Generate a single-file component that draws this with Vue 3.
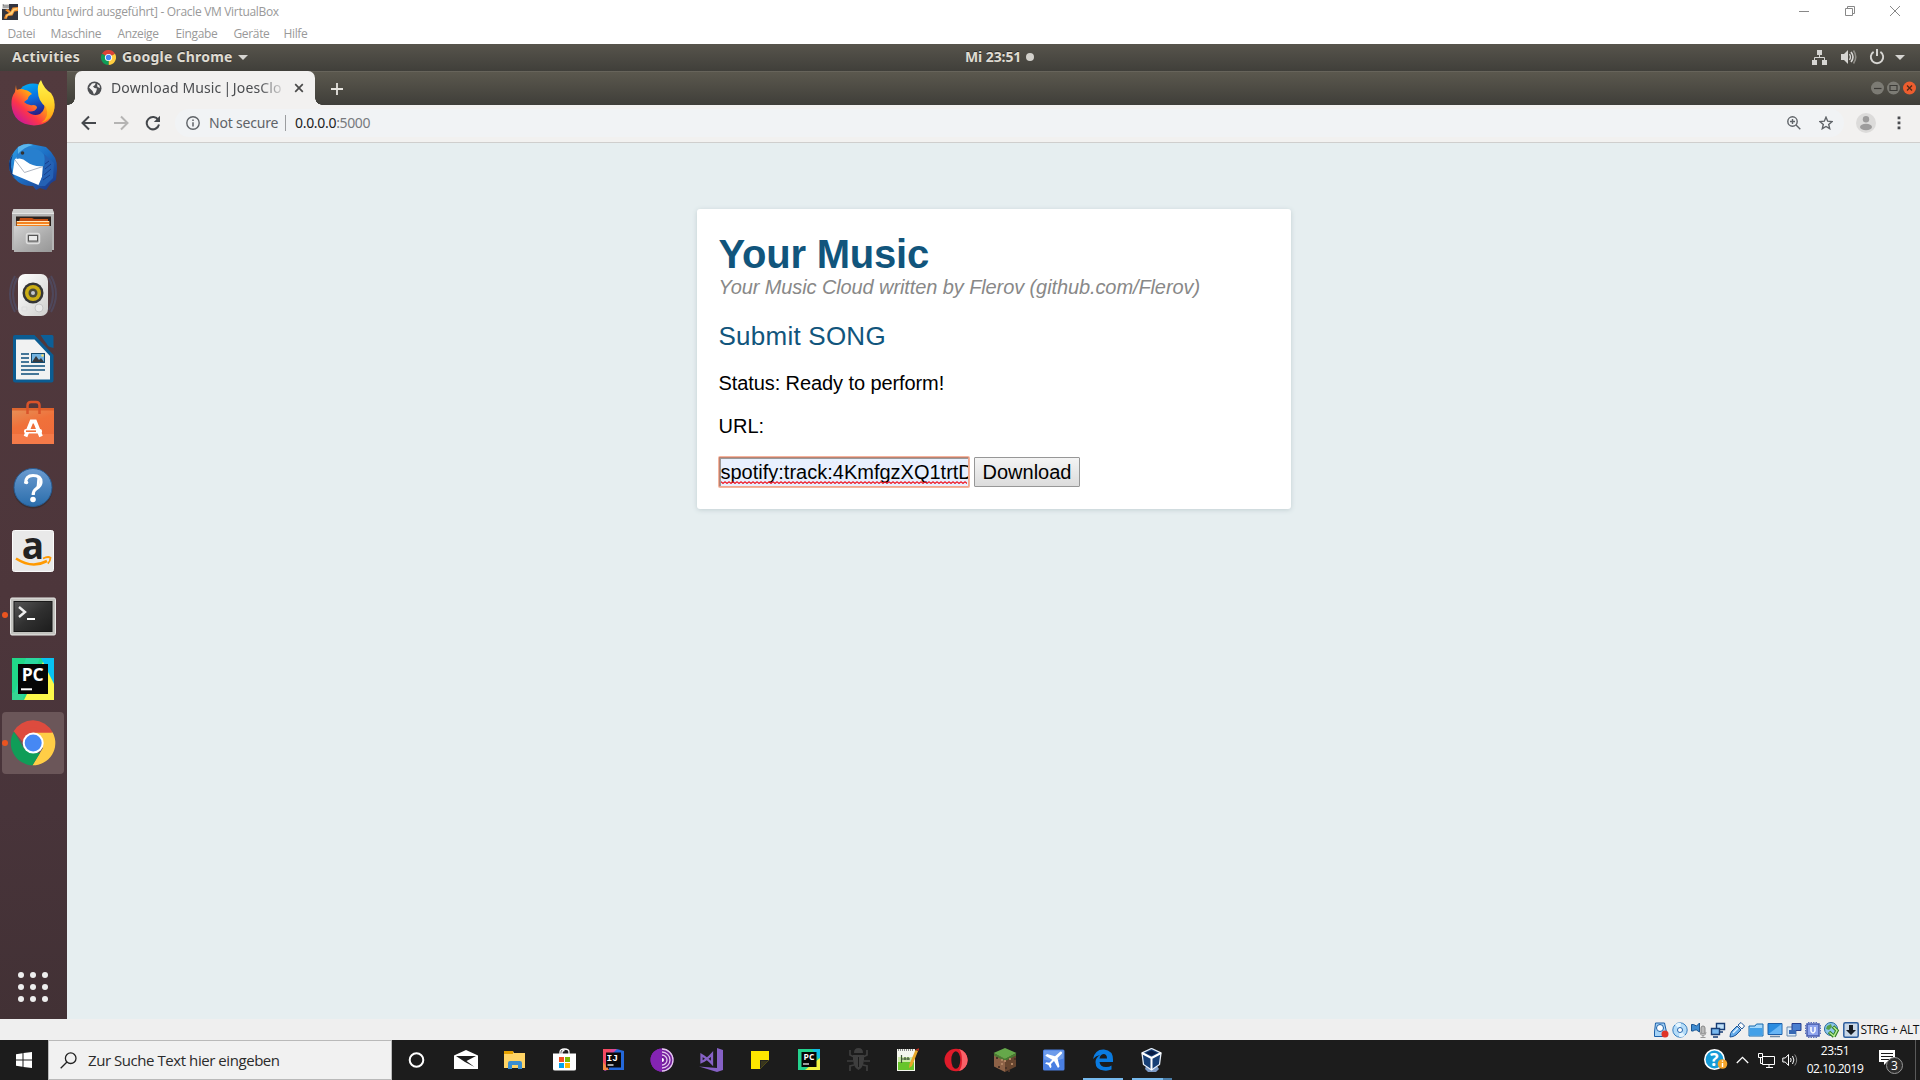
<script setup>
import { ref } from 'vue'

const menus = ['Datei', 'Maschine', 'Anzeige', 'Eingabe', 'Geräte', 'Hilfe']
const url = ref('spotify:track:4KmfgzXQ1trtD')
const gridDots = Array.from({ length: 9 }, (_, i) => i)
const soil = [
  [23, 27], [28, 33], [25, 36], [31, 30], [32, 37], [38, 33], [41, 28], [36, 28], [35, 40], [28, 29]
]
</script>

<template>
  <div class="screen">
    <!-- VirtualBox window chrome -->
    <header class="vm-head">
      <div class="vm-title">
        <svg class="vm-icon" width="16" height="16" viewBox="0 0 16 16">
          <rect width="16" height="16" fill="#33343f" />
          <path d="M3 6 L6 5 L8.500 7.500 L10.500 3.500 L16 3 V7 L12.500 7.500 L10.500 11.500 L6 12 L4.500 15 L2 14.500 L3.500 10.500 L7 9 Z" fill="#f08c2c" />
          <path d="M9 8 L11.500 4.500 L15.500 4 V5.500 L12 6.500 L10 10.500 L6 11 L4 14 L4.500 11 Z" fill="#ffd27a" />
          <rect width="7" height="5" fill="#d8d8d8" />
          <path d="M1 1h1v3M4 1v3M6 1v3" stroke="#555" fill="none" stroke-width=".8" />
        </svg>
        <span class="vm-name">Ubuntu [wird ausgeführt] - Oracle VM VirtualBox</span>
        <div class="vm-controls">
          <svg width="12" height="12" viewBox="0 0 12 12"><path d="M1 6.500h10" stroke="#888" /></svg>
          <svg width="12" height="12" viewBox="0 0 12 12"><path d="M1.500 3.500h7v7h-7zM3.500 3V1.500h7v7H9" stroke="#888" fill="none" /></svg>
          <svg width="12" height="12" viewBox="0 0 12 12"><path d="M1 1l10 10M11 1L1 11" stroke="#888" /></svg>
        </div>
      </div>
      <nav class="vm-menu">
        <span v-for="(m, i) in menus" :key="m" :class="'m' + i">{{ m }}</span>
      </nav>
    </header>

    <!-- GNOME top panel -->
    <div class="panel">
      <span class="activities">Activities</span>
      <svg class="panel-chrome" width="15" height="15" viewBox="0 0 48 48">
        <path d="M24 24 L3.200 12 A24 24 0 0 1 44.800 12 Z" fill="#db4437" />
        <path d="M24 24 L44.800 12 A24 24 0 0 1 24 48 Z" fill="#ffcd40" />
        <path d="M24 24 L24 48 A24 24 0 0 1 3.200 12 Z" fill="#0f9d58" />
        <circle cx="24" cy="24" r="11.500" fill="#fff" /><circle cx="24" cy="24" r="8.500" fill="#4285f4" />
      </svg>
      <span class="app-name">Google Chrome</span>
      <i class="caret"></i>
      <div class="clock"><span>Mi 23:51</span><i></i></div>
      <div class="sys">
        <svg width="16" height="16" viewBox="0 0 16 16"><path d="M5 1h5v5H5zM0 11h5v5H0zM10 11h5v5h-5z" fill="#d6d5d2" /><path d="M7.500 6v2.500M2.500 11V8.500h10V11" stroke="#d6d5d2" fill="none" /></svg>
        <svg width="16" height="16" viewBox="0 0 16 16"><path d="M0 5h3l4-4v14l-4-4H0z" fill="#d6d5d2" /><path d="M8.500 5q2 3 0 6" stroke="#d6d5d2" stroke-width="1.300" fill="none" /><path d="M10 3q4 5 0 10" stroke="#d6d5d2" stroke-width="1.600" fill="none" /><path d="M12.500 1.500q4.500 6.500 0 13" stroke="#8f8d87" stroke-width="1.600" fill="none" /></svg>
        <svg width="16" height="16" viewBox="0 0 16 16"><path d="M4.600 2.900a6.200 6.200 0 1 0 6.800 0" stroke="#d6d5d2" stroke-width="1.900" fill="none" /><path d="M8 0v7" stroke="#d6d5d2" stroke-width="2" /></svg>
        <i class="caret"></i>
      </div>
    </div>

    <div class="desktop">
      <!-- Dock -->
      <aside class="dock">
        <svg class="tile" viewBox="0 0 62 62">
          <defs>
            <linearGradient id="fx" x1=".9" y1=".1" x2=".15" y2=".9"><stop offset="0" stop-color="#ffdf2e" /><stop offset=".4" stop-color="#ff9a16" /><stop offset=".7" stop-color="#ff3647" /><stop offset="1" stop-color="#c8189a" /></linearGradient>
            <linearGradient id="fxb" x1="0" y1="0" x2=".3" y2="1"><stop offset="0" stop-color="#00b6f5" /><stop offset=".5" stop-color="#0a6fe0" /><stop offset="1" stop-color="#2a1a80" /></linearGradient>
            <linearGradient id="fxt" x1="0" y1="0" x2="0" y2="1"><stop offset="0" stop-color="#fff44f" /><stop offset=".5" stop-color="#ffd52a" /><stop offset="1" stop-color="#ff980e" /></linearGradient>
          </defs>
          <circle cx="31" cy="29" r="17.500" fill="url(#fxb)" />
          <path d="M14 13 Q14 17 15 18 Q19 16 23 18 Q26 18 30 22 Q26 24 26 27 L22 30 Q26 34 31 33 Q35 33 35 36 Q32 41 25 39 Q31 45 38 42 Q45 37 41 27 Q47 29 48 21 Q53 29 52.500 36 Q50 53 32 53.500 Q11 52 9.500 33 Q9 25 13 20 Z" fill="url(#fx)" />
          <path d="M39 8 Q42 17 49 21 Q54 28 52 38 Q49 48 39 51 Q48 45 44 35 Q36 29 36 20 Q35 13 39 8 Z" fill="url(#fxt)" />
        </svg>
        <svg class="tile" viewBox="0 0 62 62">
          <defs><linearGradient id="tb" x1="0" y1="0" x2="1" y2="1"><stop offset="0" stop-color="#2ea0e8" /><stop offset=".5" stop-color="#1d6fc4" /><stop offset="1" stop-color="#1b2f80" /></linearGradient></defs>
          <path d="M16 11 Q24 6 31 8.500 L44 11 Q56 21 55 33 L54 44 L49 47 L44 54 L38 52 L34 54 L31 50 Q20 51 12 42 Q3 31 10 19 Q13 14 16 11 Z" fill="url(#tb)" />
          <path d="M11 18 Q6 32 13 42 L9 38 Q4 27 11 18Z" fill="#143777" />
          <path d="M10.500 38 L12.500 24 L16 20 L41 28 L40 41 L37.500 49.500 Z" fill="#fff" />
          <path d="M13 24 L22.500 36.500 L41 30.500" fill="none" stroke="#a5acb8" stroke-width=".9" />
          <path d="M14.500 23 Q14 13 26 11 Q38 12 43 20 L42 30 Q31 31 25 26 Q20 21 14.500 23Z" fill="#277fce" />
          <path d="M16 11 Q24 6 31 9 Q22 11 16 18Z" fill="#5bb5ed" />
          <path d="M42 18 L52 27 L51 42 L43 50 L36 50 L40 41 Q45 31 42 18Z" fill="#2461b5" />
          <path d="M43 28l4-3M43 33l6-5M42 39l7-6M41 44l7-5" stroke="#163e8c" stroke-width="1" />
          <circle cx="20.500" cy="17" r="1.800" fill="#333" />
        </svg>
        <svg class="tile" viewBox="0 0 62 62">
          <defs><linearGradient id="fl" x1="0" y1="0" x2="1" y2="1"><stop offset="0" stop-color="#d2d2d2" /><stop offset=".6" stop-color="#ababab" /><stop offset="1" stop-color="#979797" /></linearGradient></defs>
          <path d="M11.500 9h39l1.500 4v37h-2v2H12v-2h-2V13z" fill="#b5b5b5" /><path d="M11.500 9h39l1.500 4H10z" fill="#cfcfcf" /><path d="M10 13.500h42" stroke="#e3e3e3" />
          <rect x="14" y="16.500" width="35" height="10" fill="#2b211d" />
          <path d="M18 18h12l2 1h14v7H16z" fill="#c54f12" /><path d="M14.500 21h33v6h-33z" fill="#f58220" /><path d="M15 21.500h32M15 24.500h32" stroke="#ffe7bd" stroke-width="1.200" />
          <rect x="12" y="26" width="38" height="26" fill="url(#fl)" />
          <rect x="24.500" y="33.500" width="13" height="10" rx="2" fill="#aaa" stroke="#dedede" stroke-width="1.500" /><rect x="26.500" y="35.500" width="9" height="5.500" fill="#e9e9e9" stroke="#555" />
        </svg>
        <svg class="tile" viewBox="0 0 62 62">
          <defs><linearGradient id="rb" x1="0" y1="0" x2="1" y2="1"><stop offset="0" stop-color="#fff" /><stop offset="1" stop-color="#cfcfcd" /></linearGradient></defs>
          <path d="M13 12q-10 18 0 36M49 12q10 18 0 36M15 14q-8 16 0 32M47 14q8 16 0 32" fill="none" stroke="#4d5c80" stroke-width="2" opacity=".45" />
          <rect x="16" y="10" width="30" height="42" rx="7" fill="url(#rb)" />
          <circle cx="31" cy="29" r="10.500" fill="#343536" /><circle cx="31" cy="29" r="8" fill="#cbae14" /><circle cx="31" cy="29" r="4.500" fill="#4b4b3d" /><circle cx="31" cy="29" r="2" fill="#c4c8d0" />
          <circle cx="37" cy="44" r="4" fill="#e9e9e9" stroke="#c6c6c6" /><path d="M20 43h5v4h-5z" fill="none" stroke="#ddd" />
        </svg>
        <svg class="tile" viewBox="0 0 62 62">
          <path d="M13 7h19.500L51.500 27v25.500a2 2 0 0 1-2 2h-36a2.500 2.500 0 0 1-2.500-2.500V9a2 2 0 0 1 2-2z" fill="#0b5c92" />
          <path d="M38.500 7h11.500q1.500 0 1.500 1.500V20q-6-1-7-4.500-4-5-6-8.500z" fill="#0c5f98" />
          <path d="M14 11.500h18.500L48 28v23.500H14z" fill="#f1f2f2" />
          <path d="M19 26h8M19 30h8M19 34h8M19 38h24M19 42h24M19 46h18" stroke="#0b4d7b" stroke-width="1.700" />
          <rect x="29.500" y="25.500" width="13" height="9" fill="#73b3e0" stroke="#134b70" /><path d="M30 34l4-6 3 4 2-2 3 4z" fill="#373a3e" /><circle cx="40.500" cy="27.500" r="1.200" fill="#ffe264" />
        </svg>
        <svg class="tile" viewBox="0 0 62 62">
          <defs><linearGradient id="sw" x1="0" y1="0" x2=".4" y2="1"><stop offset="0" stop-color="#e4935a" /><stop offset=".5" stop-color="#f0713a" /><stop offset="1" stop-color="#ef6c3b" /></linearGradient></defs>
          <path d="M10 16h42v36H10z" fill="url(#sw)" /><path d="M10 16h42v2.500H10z" fill="#d95420" opacity=".7" /><path d="M10 42h42v10H10z" fill="#f98857" opacity=".5" />
          <path d="M25.500 22V13.500q0-3.500 3.500-3.500h5q3.500 0 3.500 3.500v8.500" stroke="#d9532a" stroke-width="2.500" fill="none" />
          <path d="M23.500 44.500L29.500 29.500h3.500L39 44.500" fill="none" stroke="#fff" stroke-width="3.800" /><rect x="22" y="37" width="18" height="4.400" rx="2" fill="#fff" /><path d="M24 39.200h10" stroke="#f0713a" stroke-width="1.600" />
        </svg>
        <svg class="tile" viewBox="0 0 62 62">
          <defs><linearGradient id="hp" x1="0" y1="0" x2="0" y2="1"><stop offset="0" stop-color="#6b9bd0" /><stop offset="1" stop-color="#2a6dab" /></linearGradient></defs>
          <circle cx="31" cy="33" r="19.500" fill="#222" opacity=".4" /><circle cx="31" cy="31.500" r="19" fill="url(#hp)" stroke="#285b91" />
          <path d="M23.500 27.500 Q23.500 19.500 31 19.500 Q39 19.500 39 26 Q39 30 34.500 32.500 Q31.200 34.500 31.200 39" fill="none" stroke="#fff" stroke-width="3.200" /><path d="M35.500 20.500 Q40.500 26 34.500 32z" fill="#fff" /><circle cx="24.500" cy="26.500" r="1.800" fill="#fff" /><circle cx="31" cy="43.500" r="2.800" fill="#fff" />
        </svg>
        <svg class="tile" viewBox="0 0 62 62">
          <rect x="10.500" y="10.500" width="41" height="41" rx="2" fill="#e9e9e9" stroke="#fafafa" />
          <text x="31" y="38.500" text-anchor="middle" class="amazon-a">a</text>
          <path d="M14 38.500q16 10.500 31 2.500" fill="none" stroke="#ff9900" stroke-width="2.600" /><path d="M41 38.500q5-2.500 7.500-.8q-.2 3.500-2.700 6" fill="none" stroke="#ff9900" stroke-width="1.800" />
        </svg>
        <div class="tile running">
          <svg viewBox="0 0 62 62">
            <defs><linearGradient id="tm" x1="0" y1="0" x2="1" y2="1"><stop offset="0" stop-color="#555" /><stop offset=".5" stop-color="#303030" /><stop offset="1" stop-color="#1d1d1d" /></linearGradient></defs>
            <rect x="8.500" y="14" width="45" height="37" rx="1.500" fill="#c3c3bf" stroke="#e8e8e6" /><rect x="11.500" y="17" width="39" height="31" fill="#191919" /><rect x="12.500" y="18" width="37" height="29" fill="url(#tm)" />
            <path d="M17 23l6 5-6 5" fill="none" stroke="#eee" stroke-width="2.400" /><path d="M25 35h8" stroke="#fff" stroke-width="2" />
          </svg>
        </div>
        <svg class="tile" viewBox="0 0 62 62">
          <rect x="10" y="10" width="42" height="42" fill="#21d789" /><path d="M10 52l14-42h14L20 52z" fill="#2ad8a0" /><path d="M52 34V52H22L42 12z" fill="#fcf84a" /><path d="M39 10h13v26l-10-20z" fill="#07c3f2" /><path d="M10 45l8-2 4 9H10z" fill="#35d692" />
          <rect x="16" y="16" width="30" height="30" fill="#050505" />
          <text x="30.700" y="33" text-anchor="middle" class="pc">PC</text><path d="M19 41.300h11" stroke="#fff" stroke-width="2" />
        </svg>
        <div class="tile running active">
          <svg viewBox="0 0 62 62">
            <path d="M31.200 31 L11.500 19.500 A22.300 22.300 0 0 1 50.700 20.500 Z" fill="#dd4b3e" />
            <path d="M31.200 20.500 H50.700 A22.300 22.300 0 0 1 30.500 53.300 L41 36 Z" fill="#ffcd46" />
            <path d="M12 19.500 L22 36.500 L31 41 L38 41 L30.500 53.300 A22.300 22.300 0 0 1 12 19.500 Z" fill="#109d58" />
            <path d="M12 19.500 L21.500 31 L31.200 20.500 H50.700 L31.200 15z" fill="#dd4b3e" />
            <circle cx="31.200" cy="31" r="10.500" fill="#fff" /><circle cx="31.200" cy="31" r="8.500" fill="#4688f4" />
          </svg>
        </div>
        <div class="apps"><i v-for="d in gridDots" :key="d"></i></div>
      </aside>

      <!-- Chrome browser -->
      <section class="browser">
        <div class="tabs">
          <div class="tab">
            <svg width="15" height="15" viewBox="0 0 15 15"><circle cx="7.500" cy="7.500" r="7" fill="#4d4f52" /><path d="M2 6.500l3-4 3.500-.5L8 4l-2 1.500L7.500 7l2.500.5L9 11l-2 2.500L5.500 10zM10 3l2.500 1.500L13 7l-2.500-1z" fill="#f2f1f0" /></svg>
            <span class="tab-title">Download Music<b>|</b>JoesClo</span>
            <svg width="10" height="10" viewBox="0 0 10 10"><path d="M1.200 1.200l7.600 7.600M8.800 1.200L1.200 8.800" stroke="#4a4a4a" stroke-width="1.700" /></svg>
          </div>
          <svg class="plus" width="12" height="12" viewBox="0 0 12 12"><path d="M0 6h12M6 0v12" stroke="#e6e4df" stroke-width="1.800" /></svg>
          <div class="win-buttons">
            <svg width="13" height="14" viewBox="0 0 13 14"><circle cx="6.500" cy="7" r="6.500" fill="#7c7b74" /><path d="M3 7.500h7.500" stroke="#3c3b37" stroke-width="1.200" /></svg>
            <svg width="13" height="14" viewBox="0 0 13 14"><circle cx="6.500" cy="7" r="6.500" fill="#7c7b74" /><path d="M3 4.500h7v5H3z" stroke="#3c3b37" fill="none" stroke-width="1.200" /></svg>
            <svg width="13" height="14" viewBox="0 0 13 14"><circle cx="6.500" cy="7" r="6.500" fill="#ee5d2e" /><path d="M4 4.500l5 5M9 4.500l-5 5" stroke="#512a18" stroke-width="1.300" /></svg>
          </div>
        </div>
        <div class="toolbar">
          <svg class="nav" width="16" height="16" viewBox="0 0 16 16"><path d="M15 8H2M8 1.500L1.500 8L8 14.500" fill="none" stroke="#45484c" stroke-width="2" /></svg>
          <svg class="nav" width="16" height="16" viewBox="0 0 16 16"><path d="M1 8H14M8 1.500L14.500 8L8 14.500" fill="none" stroke="#b5b4b3" stroke-width="2" /></svg>
          <svg class="nav" width="16" height="16" viewBox="0 0 16 16"><path d="M13.300 5A6.200 6.200 0 1 0 14 9.500" fill="none" stroke="#45484c" stroke-width="2" /><path d="M15 .800V7H8.800z" fill="#45484c" /></svg>
          <div class="omnibox">
            <svg width="14" height="14" viewBox="0 0 14 14"><circle cx="7" cy="7" r="6.200" fill="none" stroke="#5f6368" stroke-width="1.400" /><path d="M7 6.200v4.300M7 3.500v1.600" stroke="#5f6368" stroke-width="1.500" /></svg>
            <span class="secure">Not secure</span><i class="sep"></i><span class="host">0.0.0.0</span><span class="port">:5000</span>
            <svg class="lens" width="14" height="14" viewBox="0 0 14 14"><circle cx="5.500" cy="5.500" r="4.700" fill="none" stroke="#5f6368" stroke-width="1.400" /><path d="M9 9l4.300 4.300M3 5.500h5M5.500 3v5" stroke="#5f6368" stroke-width="1.400" /></svg>
            <svg width="14" height="14" viewBox="0 0 14 14"><path d="M7 1.200l1.700 4 4.300.4-3.300 2.900 1 4.200L7 10.500l-3.700 2.200 1-4.200L1 5.600l4.300-.4z" fill="none" stroke="#5f6368" stroke-width="1.400" /></svg>
          </div>
          <svg class="avatar" width="20" height="20" viewBox="0 0 20 20"><circle cx="10" cy="10" r="10" fill="#dcdbda" /><circle cx="10" cy="6.200" r="3.200" fill="#9d9c9c" /><ellipse cx="10" cy="14" rx="6" ry="3.200" fill="#9d9c9c" /></svg>
          <svg width="4" height="14" viewBox="0 0 4 14"><path d="M.600.500h2.800v2.800H.600zM.600 5.500h2.800v2.800H.600zM.600 10.500h2.800v2.800H.600z" fill="#4a4c50" /></svg>
        </div>
        <main class="page">
          <div class="card">
            <h1>Your Music</h1>
            <p class="sub">Your Music Cloud written by Flerov (github.com/Flerov)</p>
            <h2>Submit SONG</h2>
            <p class="status">Status: Ready to perform!</p>
            <p class="label">URL:</p>
            <form class="row" @submit.prevent>
              <div class="field"><span>{{ url }}</span>
                <svg class="squiggle" width="246" height="3"><defs><pattern id="sq" width="4" height="3" patternUnits="userSpaceOnUse"><path d="M0 .600L2 2.400L4 .600" fill="none" stroke="#f0101c" stroke-width="1.200" /></pattern></defs><rect width="246" height="3" fill="url(#sq)" /></svg>
              </div>
              <button type="button">Download</button>
            </form>
          </div>
        </main>
      </section>
    </div>

    <!-- VirtualBox status bar -->
    <div class="vm-status">
      <svg viewBox="0 0 16 16"><path d="M2.500 1h9l2 9v4.500h-12V10z" fill="#a6d3f6" stroke="#1b5fa8" /><circle cx="7" cy="6" r="3.500" fill="#fff" stroke="#1b5fa8" /><circle cx="12" cy="12" r="3.500" fill="#df3427" /></svg>
      <svg viewBox="0 0 16 16"><circle cx="8" cy="8" r="7.200" fill="#b5dcf8" stroke="#397fc0" /><path d="M8 8L3 2.500A7 7 0 0 1 9 1zM8 8l5 5.500a7 7 0 0 1-6 1.300z" fill="#e4f5ff" /><circle cx="8" cy="8" r="2.500" fill="#fff" stroke="#2765ac" /></svg>
      <svg viewBox="0 0 16 16"><path d="M.500 2.500h2l3 1.500 3-3v9L5.500 8h-2l-1 1h-2z" fill="#3f8bd0" stroke="#1b548f" /><rect x="10" y="4" width="4" height="8" rx="2" fill="#bbb" stroke="#888" /><path d="M9 10q0 3.500 3 3.500t3-3.500M12 13v2.500M9.500 15.500h5" fill="none" stroke="#999" /></svg>
      <svg viewBox="0 0 16 16"><path d="M6.500 1.500h8v6h-8zM9 10h4" fill="#bfe0fa" stroke="#173c74" stroke-width="1.400" /><path d="M1.500 6.500h8v6h-8zM3 15h5" fill="#78b8ef" stroke="#173c74" stroke-width="1.400" /></svg>
      <svg viewBox="0 0 16 16"><path d="M1 15q0-4 2-6l5-5 4 4-5 5q-3 2-6 2z" fill="#64abea" stroke="#1c5599" /><path d="M9 3l3-2.500 3.500 3.500L13 7z" fill="#fff" stroke="#1c5599" /><path d="M4 11l5-5" stroke="#e0f2ff" stroke-width="1.500" /></svg>
      <svg viewBox="0 0 16 16"><path d="M1 4h6l1.500-2H15v12H1z" fill="#a6d8fb" stroke="#1769ad" /><path d="M1.500 6h13v7.500h-13z" fill="#43a0e8" /></svg>
      <svg viewBox="0 0 16 16"><path d="M1 1.500h14v11H1z" fill="#2b8ce0" stroke="#1d5ca5" /><path d="M1.500 12L14.500 2v10z" fill="#68b5f5" /><path d="M3 14.500h10" stroke="#6e87a2" stroke-width="1.500" /></svg>
      <svg viewBox="0 0 16 16"><path d="M1 5h9v9H1z" fill="#dcebf7" stroke="#6a89ae" /><path d="M6 1.500h9v7H6z" fill="#4b7fd0" stroke="#273f8f" /><path d="M3 8h7v4H3z" fill="#3768b5" /></svg>
      <svg viewBox="0 0 16 16"><rect x="2" y="2" width="12" height="12" fill="#8ea3ed" stroke="#4459ad" stroke-width="1.500" /><path d="M3 .500h10M3 15.500h10M.500 3v10M15.500 3v10" stroke="#5c70bd" stroke-dasharray="1.500 1" /><path d="M6 5v4q2 4 4 0V5" fill="none" stroke="#fff" stroke-width="1.500" /></svg>
      <svg viewBox="0 0 16 16"><circle cx="7" cy="7" r="6.500" fill="#8cc6ea" stroke="#24679d" /><path d="M3 4l4-2 1 3-3 3-3-1z" fill="#55a04a" /><path d="M5 10l5 4.500M9 4.500l4 4-3 6" fill="none" stroke="#347d26" stroke-width="3.600" /><path d="M5.500 10.500l4.500 3.500 3-5.500-3.500-3.500" fill="none" stroke="#b5ee91" stroke-width="1.500" /></svg>
      <svg viewBox="0 0 16 16"><rect x=".800" y=".800" width="14.400" height="14.400" rx="1.500" fill="#c9d7e7" stroke="#2c5c9c" stroke-width="1.500" /><path d="M6 3h4v5h3l-5 5-5-5h3z" fill="#171b22" /></svg>
      <span class="hostkey">STRG + ALT</span>
    </div>

    <!-- Windows taskbar -->
    <footer class="taskbar">
      <div class="start"><svg width="16" height="16" viewBox="0 0 16 16"><path d="M0 2.200L6.500 1.200V7.500H0zM7.500 1L16 0V7.500H7.500zM0 8.500h6.500v6.300L0 13.800zM7.500 8.500H16V16l-8.500-1z" fill="#fff" /></svg></div>
      <div class="search">
        <svg width="17" height="17" viewBox="0 0 17 17"><circle cx="10.700" cy="6.200" r="5.300" fill="none" stroke="#222" stroke-width="1.300" /><path d="M7 10L.700 16.300" stroke="#222" stroke-width="1.300" /></svg>
        <span>Zur Suche Text hier eingeben</span>
      </div>
      <div class="tasks">
        <div><svg viewBox="0 0 24 24"><circle cx="11.500" cy="12" r="6.800" fill="none" stroke="#fff" stroke-width="2" /></svg></div>
        <div><svg viewBox="0 0 24 24"><path d="M0 7.500L12 2l12 5.500V21H0z" fill="#fff" /><path d="M2 8h20l-9.500 5 8 6L11 14z" fill="#1c1c1c" /></svg></div>
        <div><svg viewBox="0 0 24 24"><path d="M1 3h9l1 2h11v15H1z" fill="#ffd465" /><path d="M1 3h9v3H1z" fill="#e5a100" /><path d="M5 21v-6q0-2 2-2h10q2 0 2 2v6h-4v-4H9v4z" fill="#3b8ed0" /></svg></div>
        <div><svg viewBox="0 0 24 24"><path d="M8 6V4q0-3 4.500-3T17 4v2M10 6V4q0-1.500 2.500-1.500" fill="none" stroke="#fff" stroke-width="1.300" /><path d="M1 5.500h23V21q0 1.500-2 1.500H3Q1 22.500 1 21z" fill="#fff" /><path d="M7 9h5v5H7z" fill="#f25022" /><path d="M13 9h5v5h-5z" fill="#7fba00" /><path d="M7 15h5v5H7z" fill="#00a4ef" /><path d="M13 15h5v5h-5z" fill="#ffb900" /></svg></div>
        <div><svg viewBox="0 0 24 24"><path d="M2 1h14L6 22H2z" fill="#f44a62" /><path d="M10 1h6L5 23H3z" fill="#c44bb0" opacity=".7" /><path d="M2 14l6 8H2z" fill="#f68b42" /><path d="M16 1l7 2v19H8V9z" fill="#2468da" /><rect x="5" y="4.500" width="15" height="15" fill="#090909" /><text x="5.500" y="13" class="ij">IJ</text><path d="M6.500 17h6" stroke="#fff" stroke-width="1.300" /></svg></div>
        <div><svg viewBox="0 0 24 24"><circle cx="12" cy="12" r="11.500" fill="#731d9c" /><path d="M12 .500A11.500 11.500 0 0 0 12 23.500z" fill="#8424b3" /><path d="M12 4a8 8 0 0 1 0 16M12 7a5 5 0 0 1 0 10M12 1a11 11 0 0 1 0 22" fill="none" stroke="#e4c9ee" stroke-width="1.300" /><path d="M12 10a2 2 0 0 1 0 4z" fill="#fff" /></svg></div>
        <div><svg viewBox="0 0 24 24"><path d="M18 0l6 2v20l-6 2L0 18.500l18 1.500z" fill="#8661c5" /><path d="M2.500 7v7q5-2 10.500-8v9.500Q7 9.500 2.500 7z" fill="none" stroke="#8661c5" stroke-width="2.300" /></svg></div>
        <div><svg viewBox="0 0 24 24"><path d="M3 3h18v18H3z" fill="#ffe500" /><path d="M12 21v-9h9z" fill="#222" /><path d="M12 21l9-9v9z" fill="#1c1c1c" /><path d="M13 19.500v-6.500h6.500z" fill="#39361d" /></svg></div>
        <div><svg viewBox="0 0 24 24"><path d="M1 1h22v21H1z" fill="#24d28e" /><path d="M15 1h8v12z" fill="#10bde4" /><path d="M23 10v12H8z" fill="#eff143" /><rect x="4.500" y="4" width="15" height="15" fill="#050505" /><text x="12" y="12.200" text-anchor="middle" class="pc-small">PC</text><path d="M6 16h6" stroke="#fff" stroke-width="1.200" /></svg></div>
        <div><svg viewBox="0 0 24 24"><path d="M8 5q0-5 4.500-5T17 5zM7 7h11q1 12-5.500 15Q6 19 7 7z" fill="#3e3e3e" /><path d="M8 9L4 7V2M17 9l4-2V2M7 13H1M18 13h6M8 17l-4 1v5M17 17l4 1v5" fill="none" stroke="#3e3e3e" stroke-width="1.700" /><path d="M12.500 9v10" stroke="#1c1c1c" /></svg></div>
        <div><svg viewBox="0 0 24 24"><path d="M2 1h18v22H2z" fill="#f4f6ee" /><path d="M3 13h16v9H3z" fill="#67c52b" /><path d="M3 9h16v5H3z" fill="#cce9a8" /><path d="M3 2h15" stroke="#888" stroke-dasharray="1 1" stroke-width="2" /><path d="M6.500 7v8M10 9v3M13 9v3M7 11h8" stroke="#3c5633" stroke-width="1.200" /><path d="M20.500 2l2.500 1-6 15-3 2 .5-4z" fill="#e8a72a" /><path d="M20.500 1.500L23.500 3l1-3z" fill="#bd3021" /></svg></div>
        <div><svg viewBox="0 0 24 24"><ellipse cx="12" cy="12" rx="11.500" ry="11.300" fill="#df1b2a" /><path d="M15 1a11.300 11.300 0 0 1 0 22q3-3 3-11t-3-11z" fill="#fa6168" /><ellipse cx="11.800" cy="12" rx="4.500" ry="8.700" fill="#1c1c1c" /></svg></div>
        <div><svg viewBox="20 18 24 24"><path d="M21 23.500l11 5V42l-11-5.500z" fill="#8d6247" /><path d="M43 23.500l-11 5V42l11-5.500z" fill="#66452f" /><path d="M32 18l11.500 5L32 29l-11.500-6z" fill="#65a84a" /><path d="M21 23.500l11 5.500 11-5.500v2l-11 5.500-11-5.500z" fill="#467c31" /><rect v-for="(p, i) in soil" :key="i" :x="p[0]" :y="p[1]" width="2" height="2" :fill="i % 2 ? '#b08462' : '#4b3327'" /></svg></div>
        <div><svg viewBox="0 0 24 24"><rect x="1" y="1.500" width="21.500" height="21" rx="1.500" fill="#4a7fe2" /><path d="M2 2.500h19.500v8q-10 4-19.500 1z" fill="#8db5f0" opacity=".55" /><path d="M18.500 3.500q2 0 1.500 2L15.500 10l2 8.500-1.500 1.500-4-7-3 3 .5 3-1.300 1.300L6.500 17 3 15.500l1.300-1.300 3 .5 3-3-7-4L5 6l8 2.200z" fill="#fff" /></svg></div>
        <div class="open"><svg viewBox="0 0 24 24"><path d="M2 11Q4 1 13 1.500Q22 2.500 22 11.500V14H8.500Q9 19 15 19Q18.500 19 20.500 17.500V21.500Q17 23 13 22.500Q4.500 22 4.500 14Q4.500 10 9 7Q5 7.500 2 11ZM8.500 10.500H16Q16 6 12.500 6Q9 6.500 8.500 10.500Z" fill="#0a7be0" /></svg></div>
        <div class="open multi"><svg viewBox="0 0 24 24"><path d="M6 18h11l2 3-3 3H8l-3-3z" fill="#7c9ac5" /><path d="M11.500.500l9.500 4.500-1.500 11.500-8 5.500-8-5.500L2 5z" fill="#173f75" stroke="#e6eef8" stroke-width="1.300" /><path d="M2 5l9.500 5 9.500-5M11.500 10v12" fill="none" stroke="#fff" stroke-width="2" /><path d="M6 5l5.500-2.500L17 5l-5.500 2.500z" fill="#081c44" /></svg></div>
      </div>
      <div class="tray">
        <svg class="t-help" width="24" height="22" viewBox="0 0 24 22"><circle cx="10.500" cy="10.500" r="9.700" fill="#169bd7" stroke="#fff" stroke-width="1.600" /><text x="10.300" y="17" text-anchor="middle" class="tray-q">?</text><circle cx="18.500" cy="15" r="4.800" fill="#f4a52b" /><path d="M18.500 14v4M18.500 11.500v1.300" stroke="#fff" stroke-width="1.400" /></svg>
        <svg class="t-up" width="13" height="8" viewBox="0 0 13 8"><path d="M.800 7L6.500 1.300L12.200 7" fill="none" stroke="#fff" stroke-width="1.300" /></svg>
        <svg class="t-net" width="17" height="15" viewBox="0 0 17 15"><path d="M4.500 3.500h12v8h-12zM8 14.500h7M11 11.500v3M.500.500h4v4h-4zM2.500 4.500v6h2" fill="none" stroke="#fff" /></svg>
        <svg class="t-snd" width="17" height="14" viewBox="0 0 17 14"><path d="M.800 5h2.500L6.500 1.500v11L3.300 9H.800z" fill="none" stroke="#fff" /><path d="M8.500 5q1.300 2 0 4M10.500 3q2.800 4 0 8" fill="none" stroke="#fff" /><path d="M12.700 1.500q4 5.500 0 11" fill="none" stroke="#888" /></svg>
        <div class="t-clock"><span>23:51</span><span>02.10.2019</span></div>
        <svg class="t-note" width="26" height="26" viewBox="0 0 26 26"><path d="M1 1h16v12H9l-3 3v-3H1z" fill="#fff" /><path d="M3 4.500h12M3 7.500h12M3 10.500h8" stroke="#1c1c1c" /><circle cx="16.500" cy="16.500" r="8" fill="#2d2d2d" stroke="#999" /><text x="16.500" y="20.800" text-anchor="middle" class="badge">3</text></svg>
        <i class="peek"></i>
      </div>
    </footer>
  </div>
</template>

<style>
body { margin: 0; overflow: hidden; }
</style>

<style scoped>
* { box-sizing: border-box; }
svg { display: block; flex: none; }
span { white-space: nowrap; }
.screen { width: 1920px; height: 1080px; display: flex; flex-direction: column; overflow: hidden; font-family: "Noto Sans", sans-serif; background: #efefef; }

.vm-head { height: 44px; flex: none; background: #fff; color: #999; font-family: "Open Sans", sans-serif; font-size: 12px; }
.vm-title { height: 23px; display: flex; align-items: center; padding-left: 2px; }
.vm-icon { margin-right: 5px; }
.vm-name { letter-spacing: -.31px; }
.vm-controls { margin-left: auto; display: flex; gap: 33.500px; padding-right: 19px; position: relative; top: -1px; }
.vm-menu { display: flex; height: 21px; line-height: 21px; padding-left: 7.500px; letter-spacing: -.35px; }
.m0 { width: 43px; } .m1 { width: 67px; } .m2, .m3 { width: 58px; } .m4 { width: 50px; }

.panel { height: 27px; flex: none; display: flex; align-items: center; background: linear-gradient(#57544c, #403f3a); color: #dfdbd2; font-size: 14px; line-height: 18px; padding-bottom: 1px; font-weight: 700; padding-left: 12px; position: relative; text-shadow: 0 -1px #2b2a27; }
.activities { width: 89px; letter-spacing: .3px; }
.panel-chrome { margin-right: 6px; }
.app-name { width: 116px; letter-spacing: .25px; }
.caret { width: 0; height: 0; border: 5px solid transparent; border-top-color: #d6d5d2; border-bottom: 0; }
.clock { position: absolute; left: 965px; top: 0; height: 26px; display: flex; align-items: center; gap: 5px; letter-spacing: -.1px; }
.clock i { width: 8px; height: 8px; border-radius: 50%; background: #d2d0cb; }
.sys { margin-left: auto; display: flex; align-items: center; gap: 12.500px; padding-right: 15px; }
.sys .caret { margin-left: -2.500px; }

.desktop { flex: 1; display: flex; min-height: 0; }
.dock { width: 67px; flex: none; background: linear-gradient(178deg, #523a3e 0%, #4d363b 55%, #48343a 78%, #423135 100%); padding: 1px 0 0 2px; display: flex; flex-direction: column; gap: 2px; }
.tile { width: 62px; height: 62px; flex: none; }
.running { position: relative; border-radius: 4px; }
.running::before { content: ""; position: absolute; left: 0; top: 28px; width: 6px; height: 6px; border-radius: 50%; background: #e95420; }
.active { background: #6b5659; }
.amazon-a { font: 700 37px "Open Sans", sans-serif; fill: #222; }
.pc { font: 700 17.500px "Open Sans", sans-serif; fill: #fff; }
.pc-small { font: 700 8.500px "Open Sans", sans-serif; fill: #fff; }
.ij { font: 700 9.500px "Liberation Mono", monospace; fill: #fff; }
.apps { display: grid; grid-template-columns: repeat(3, 6px); gap: 6px; margin: auto 0 17px 16px; }
.apps i { width: 6px; height: 6px; border-radius: 50%; background: #eee; }

.browser { flex: 1; display: flex; flex-direction: column; min-width: 0; }
.tabs { height: 34px; flex: none; background: linear-gradient(#5b584e, #3f3e39); border-top: 1px solid #67645b; display: flex; align-items: center; padding-left: 8px; }
.tab { width: 240px; height: 34px; margin-top: -1px; background: #f2f1f0; border-radius: 7px 7px 0 0; display: flex; align-items: center; padding: 0 11.500px 0 12px; position: relative; }
.tab::before, .tab::after { content: ""; position: absolute; bottom: 0; width: 7px; height: 7px; }
.tab::before { left: -7px; background: radial-gradient(circle at 0 0, transparent 6.500px, #f2f1f0 7px); }
.tab::after { right: -7px; background: radial-gradient(circle at 100% 0, transparent 6.500px, #f2f1f0 7px); }
.tab-title { margin-left: 9px; width: 176px; margin-right: auto; overflow: hidden; font-size: 14px; line-height: 20px; padding-bottom: 1px; color: #4b4d50; letter-spacing: .13px; -webkit-mask-image: linear-gradient(90deg, #000 84%, transparent 100%); mask-image: linear-gradient(90deg, #000 84%, transparent 100%); }
.tab-title b { font-weight: 400; margin: 0 1.500px 0 2px; }
.plus { margin-left: 16px; }
.win-buttons { margin-left: auto; display: flex; gap: 3px; padding-right: 4px; position: relative; top: -1px; }
.toolbar { height: 38px; flex: none; background: #f2f1f0; border-bottom: 1px solid #cfcecd; display: flex; align-items: center; padding: 0 19px 1px 14px; }
.nav { margin-right: 16px; }
.omnibox { height: 28px; width: 1669px; margin-left: -2px; border-radius: 14px; background: #f1f3f5; display: flex; align-items: center; padding: 0 11px; font-size: 14px; line-height: 20px; }
.secure { color: #5f6368; margin-left: 9px; width: 76px; letter-spacing: -.2px; }
.sep { width: 1px; height: 16px; background: #9b9da0; margin-right: 9px; }
.host { color: #222; letter-spacing: -.3px; }
.port { color: #777a7e; letter-spacing: -.4px; }
.lens { margin-left: auto; margin-right: 18px; }
.avatar { margin-left: 12px; margin-right: auto; }

.page { flex: 1; background: #e6eef0; padding-top: 66px; font: 20px/23px "Liberation Sans", sans-serif; color: #000; }
.card { width: 594px; height: 300px; margin: 0 auto; padding: 22px 22px 0; background: #fff; border-radius: 3px; box-shadow: 0 1px 5px #c2cfd2; }
.card > * { margin: 0; }
.card h1 { font-size: 40px; line-height: 46px; color: #11557c; letter-spacing: -.22px; }
.card .sub { font-style: italic; color: #888; letter-spacing: -.1px; margin-top: -1px; }
.card h2 { font-size: 26px; line-height: 30px; font-weight: 400; color: #11557c; margin-top: 22px; letter-spacing: .24px; }
.card .status { margin-top: 21px; letter-spacing: -.09px; }
.card .label { margin-top: 20px; }
.row { display: flex; gap: 5px; padding-top: 19px; }
.field { width: 250px; height: 30px; padding: 1px; border: 1px solid #ee9d82; border-color: #bb8271 #f0a78e #f0a78e #bb8271; border-radius: 1px; background: #e8f0fe; box-shadow: 0 0 0 1px #f5b49d, inset 1px 1px 0 #999; overflow: hidden; position: relative; line-height: 26px; }
.squiggle { position: absolute; left: 1px; bottom: 2px; }
.row button { width: 106px; height: 30px; padding: 0 0 0 1px; border: 1px solid #979797; border-radius: 1px; background: linear-gradient(#f4f4f4, #dcdcdc); font: 20px "Liberation Sans", sans-serif; color: #000; }

.vm-status { height: 21px; flex: none; background: #efefef; display: flex; align-items: center; padding-left: 1652.500px; gap: 3px; }
.vm-status svg { width: 16px; height: 16px; }
.hostkey { font: 12px "Open Sans", sans-serif; letter-spacing: -.45px; color: #111; margin-left: -1px; }

.taskbar { height: 40px; flex: none; background: #1c1c1c; display: flex; color: #fff; }
.start { width: 48px; display: flex; align-items: center; justify-content: center; }
.search { width: 344px; border: 1px solid #b9b9b9; background: #f1f1f1; display: flex; align-items: center; padding-left: 11px; font: 15px "Open Sans", sans-serif; color: #2b2b2b; }
.search span { margin-left: 11px; letter-spacing: -.44px; }
.tasks { display: flex; }
.tasks > div { width: 49px; display: flex; align-items: center; justify-content: center; position: relative; }
.tasks svg { width: 24px; height: 24px; position: relative; left: .5px; }
.open::after { content: ""; position: absolute; bottom: 0; left: 5px; width: 40px; height: 2px; background: #76b9ed; }
.multi::after { background: linear-gradient(90deg, #76b9ed 31px, #4a7da8 31px); }
.tray { margin-left: auto; display: flex; align-items: center; font: 12px "Open Sans", sans-serif; }
.t-up { margin-left: 8px; }
.t-net { margin-left: 9px; }
.t-snd { margin-left: 7px; }
.t-clock { width: 74px; display: flex; flex-direction: column; align-items: center; line-height: 18px; letter-spacing: -.45px; margin-left: -1px; }
.t-note { margin-left: 6px; position: relative; top: 2px; }
.peek { width: 1px; height: 40px; background: #5a5a5a; margin: 0 4px 0 11px; }
.tray-q { font: 700 18px "Open Sans", sans-serif; fill: #fff; }
.badge { font: 12px "Open Sans", sans-serif; fill: #fff; }
</style>
